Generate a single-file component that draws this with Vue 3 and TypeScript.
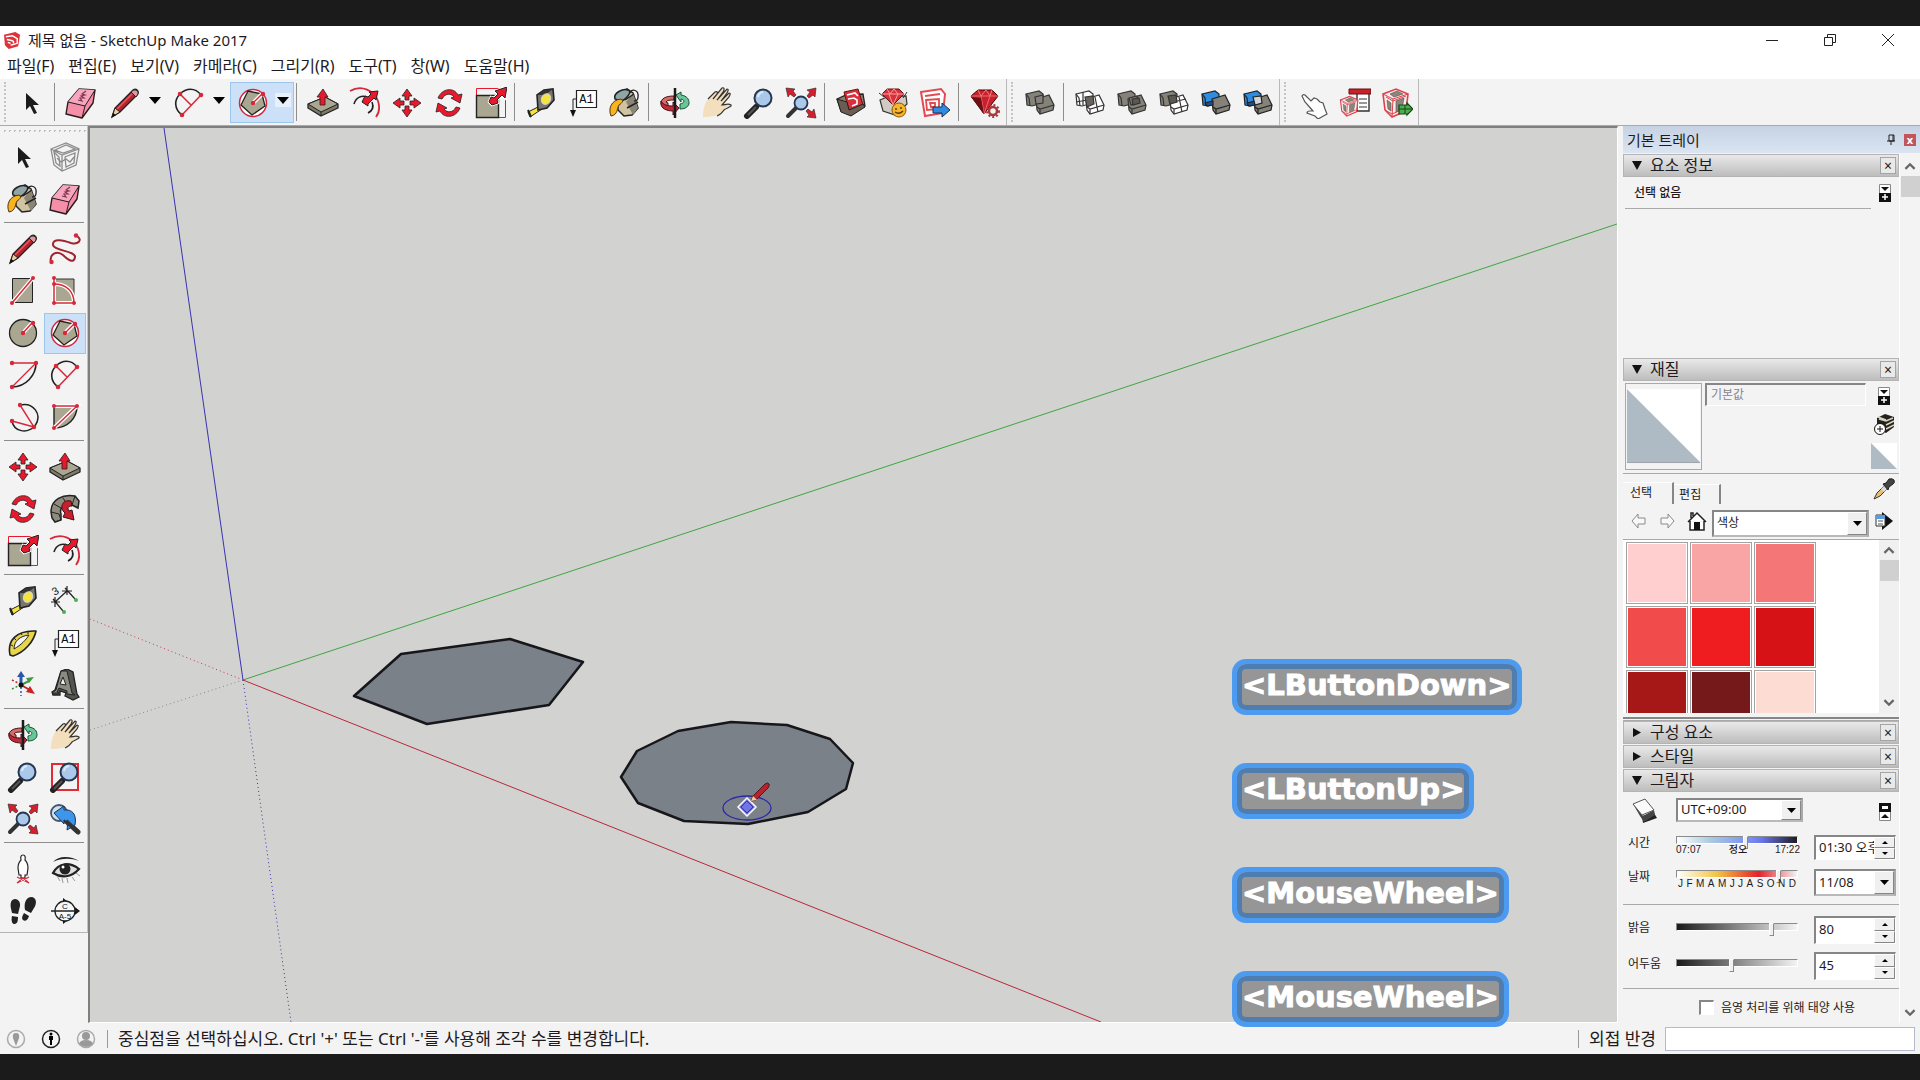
<script setup lang="ts">
import { ref } from 'vue'

interface Tool {
  icon: string
  label: string
  menu?: boolean
  on?: boolean
}

const menus: string[] = ['파일(F)', '편집(E)', '보기(V)', '카메라(C)', '그리기(R)', '도구(T)', '창(W)', '도움말(H)']

const bars: Tool[][][] = [
  [
    [{ icon: 'select', label: '선택' }],
    [
      { icon: 'eraser', label: '지우개' },
      { icon: 'pencil', label: '선', menu: true },
      { icon: 'arc2', label: '호', menu: true },
      { icon: 'polygon', label: '다각형', menu: true, on: true },
    ],
    [
      { icon: 'pushpull', label: '밀기/끌기' },
      { icon: 'offset', label: '오프셋' },
      { icon: 'move', label: '이동' },
      { icon: 'rotate', label: '회전' },
      { icon: 'scale', label: '배율' },
    ],
    [
      { icon: 'tape', label: '줄자' },
      { icon: 'note', label: '텍스트' },
      { icon: 'paint', label: '페인트통' },
    ],
    [
      { icon: 'orbit', label: '궤도' },
      { icon: 'pan', label: '이동 보기' },
      { icon: 'zoom', label: '확대/축소' },
      { icon: 'extents', label: '전체 보기' },
    ],
    [
      { icon: 'warehouse', label: '3D Warehouse' },
      { icon: 'extwarehouse', label: 'Extension Warehouse' },
      { icon: 'layout', label: 'LayOut' },
    ],
    [{ icon: 'ruby', label: '확장 프로그램' }],
  ],
  [
    [{ icon: 'shell', label: '외부 셸' }],
    [
      { icon: 'intersect', label: '교차' },
      { icon: 'union', label: '결합' },
      { icon: 'subtract', label: '빼기' },
      { icon: 'trim', label: '트림' },
      { icon: 'split', label: '분할' },
    ],
  ],
  [
    [
      { icon: 'interact', label: '상호 작용' },
      { icon: 'options', label: '구성 요소 옵션' },
      { icon: 'attributes', label: '구성 요소 속성' },
    ],
  ],
]

const palette: Tool[][] = [
  [
    { icon: 'select', label: '선택' },
    { icon: 'component', label: '구성 요소' },
    { icon: 'paint', label: '페인트통' },
    { icon: 'eraser', label: '지우개' },
  ],
  [
    { icon: 'pencil', label: '선' },
    { icon: 'freehand', label: '자유형' },
    { icon: 'rect', label: '직사각형' },
    { icon: 'rotrect', label: '회전 직사각형' },
    { icon: 'circle', label: '원' },
    { icon: 'polygon', label: '다각형', on: true },
    { icon: 'arc', label: '호' },
    { icon: 'arc2', label: '2점 호' },
    { icon: 'arc3', label: '3점 호' },
    { icon: 'pie', label: '파이' },
  ],
  [
    { icon: 'move', label: '이동' },
    { icon: 'pushpull', label: '밀기/끌기' },
    { icon: 'rotate', label: '회전' },
    { icon: 'follow', label: '따라가기' },
    { icon: 'scale', label: '배율' },
    { icon: 'offset', label: '오프셋' },
  ],
  [
    { icon: 'tape', label: '줄자' },
    { icon: 'dimension', label: '치수' },
    { icon: 'protractor', label: '각도기' },
    { icon: 'note', label: '텍스트' },
    { icon: 'axes', label: '축' },
    { icon: 'text3d', label: '3D 텍스트' },
  ],
  [
    { icon: 'orbit', label: '궤도' },
    { icon: 'pan', label: '이동 보기' },
    { icon: 'zoom', label: '확대/축소' },
    { icon: 'zoomwin', label: '확대/축소 창' },
    { icon: 'extents', label: '전체 보기' },
    { icon: 'previous', label: '이전' },
  ],
  [
    { icon: 'position', label: '카메라 배치' },
    { icon: 'look', label: '둘러보기' },
    { icon: 'walk', label: '걷기' },
    { icon: 'section', label: '단면' },
  ],
]

const keys: string[] = ['<LButtonDown>', '<LButtonUp>', '<MouseWheel>', '<MouseWheel>']
const swatches: string[] = ['#ffcfcf', '#faa5a5', '#f57676', '#f24b4b', '#ef1d20', '#d61216', '#a61718', '#76191a', '#fdddd3']
const months: string[] = 'JFMAMJJASOND'.split('')

const time = ref(57)
const date = ref(86)
const light = ref(80)
const dark = ref(45)
const sunShading = ref(false)
</script>

<template>
  <svg class="sprite" aria-hidden="true">
    <defs>
      <g id="lens">
        <path d="M4 29l9-9" stroke="#222" stroke-width="6" stroke-linecap="round" />
        <path d="M5 28l8-8" stroke="#555" stroke-width="2" />
        <circle cx="20" cy="11" r="8.5" fill="#a9c8ea" stroke="#27364f" stroke-width="2" />
        <path d="M15 10a6 6 0 0 1 5-5" stroke="#dcebfa" stroke-width="2" fill="none" />
      </g>
      <g id="box-a"><path d="M2 7l13-3 4 3v9l-11 3-5-1z" /><path d="M2 7l3 4 1 8" fill="none" /></g>
      <g id="box-b"><path d="M12 12l13-4 5 10-1 5-13 4-3-4z" /><path d="M13 20l3 2 14-4M16 22v5" fill="none" /></g>
      <g id="cube-red">
        <path d="M2 7L15 2l12 5-2 17-14 6L4 23z" fill="#f6eeee" stroke="#e0404c" stroke-width="1.6" />
        <path d="M9 7l7-3 6 3-9 3zM15 14l8-3-2 11-6 3zM6 13l4 3 0 8-3-2z" fill="#8b857b" stroke="#554f48" stroke-width="0.6" />
        <path d="M2 7l10 5 15-5M12 12l-1 18M5 10l7 4 13-5M4 23l7 4 14-6" fill="none" stroke="#e0404c" stroke-width="1" />
      </g>
    </defs>

    <symbol id="i-select" viewBox="0 0 32 32"><path d="M11 6v17l4-4 4 8 3-1-4-8h6z" fill="#1b1b1b" /></symbol>
    <symbol id="i-component" viewBox="0 0 32 32">
      <g fill="none" stroke="#8b8b8b" stroke-width="1.3">
        <path d="M2 8l15-6 13 6-3 16-14 6L5 24zM2 8l11 6 17-6M13 14v16M6 9l11-5 9 4-12 4zM5 11l2 11 4 3-1-9zM16 16l10-4-1 10-8 4z" />
        <path d="M8 17l4 4 5-3 4 3 4-5" />
      </g>
    </symbol>
    <symbol id="i-paint" viewBox="0 0 32 32">
      <path d="M8 8L18 2l6 4 5 15-6 7-8 1-6-6z" fill="#cfc3a2" stroke="#222" stroke-width="1.5" />
      <path d="M17 15l7-9 5 15-5 7z" fill="#8a8574" />
      <path d="M6 12C4 6 14 1 19 3c5 1-2 10-7 11z" fill="#8fa5a6" stroke="#222" stroke-width="1.5" />
      <path d="M16 13l9-6M18 21l11-6" stroke="#222" stroke-width="1.5" />
      <path d="M21 6c2-5 9-3 8 4 0 3-2 4-4 4" fill="none" stroke="#222" stroke-width="1.3" />
      <path d="M2 29C-1 22 2 13 12 12c3 2 1 4-2 6-2 3-1 10-8 11z" fill="#f8b420" stroke="#4a3610" />
    </symbol>
    <symbol id="i-eraser" viewBox="0 0 32 32">
      <path d="M14 2l16 1-2 13-11 15-16-4 2-12z" fill="#f58fa9" stroke="#2a1a1e" stroke-width="1.4" stroke-linejoin="round" />
      <path d="M14 2l16 1-10 16-17-4z" fill="#f7a6c0" />
      <path d="M3 15l17 4L30 3M20 19l-3 12" fill="none" stroke="#2a1a1e" />
      <path d="M21 4l-4 3 3 1-4 1 3 2-4 0 2 3-4-1" fill="none" stroke="#80384c" stroke-width="1.2" />
    </symbol>
    <symbol id="i-pencil" viewBox="0 0 32 32">
      <path d="M3 30l3-9L24 3q3-2 5 1 1 2-1 4L11 25z" fill="#b9222c" stroke="#222" stroke-width="1.3" />
      <path d="M8 22L24 6" stroke="#e75a5e" stroke-width="1.5" />
      <path d="M3 30l3-9 5 4z" fill="#e9cfa0" stroke="#222" /><path d="M3 30l1-4 3 2z" fill="#111" />
      <path d="M22 5l5 5 2-3q1-3-2-4-2-1-5 2z" fill="#d99aa0" stroke="#222" />
    </symbol>
    <symbol id="i-freehand" viewBox="0 0 32 32">
      <path d="M2 29C0 21 8 17 14 22c5 5 11 9 12 2 1-6-21-6-22-12C3 4 16 8 22 10c7 2 12-3 6-7" fill="none" stroke="#a02430" stroke-width="2" />
      <circle cx="2.500" cy="29" r="2.2" fill="#d6283a" /><circle cx="27" cy="2.500" r="2.2" fill="#d6283a" />
    </symbol>
    <symbol id="i-rect" viewBox="0 0 32 32">
      <path d="M5.500 3.500h20v24h-20z" fill="#a9a691" stroke="#222" />
      <path d="M5 28L26 3" stroke="#fff" stroke-width="4" /><path d="M5 28L26 3" stroke="#d6283a" stroke-width="1.5" />
      <circle cx="5" cy="28" r="2" fill="#d6283a" /><circle cx="26" cy="3" r="2" fill="#d6283a" />
    </symbol>
    <symbol id="i-rotrect" viewBox="0 0 32 32">
      <path d="M6 4h19v24H6z" fill="#a9a691" stroke="#333" />
      <path d="M5 3v25h20C25 16 17 9 5 9" fill="none" stroke="#fff" stroke-width="4" />
      <path d="M5 3v25h20C25 16 17 9 5 9" fill="none" stroke="#d6283a" stroke-width="1.5" />
      <g fill="#d6283a"><circle cx="5" cy="3" r="2" /><circle cx="5" cy="9" r="2" /><circle cx="5" cy="28" r="2" /><circle cx="25" cy="28" r="2" /></g>
    </symbol>
    <symbol id="i-circle" viewBox="0 0 32 32">
      <circle cx="16" cy="16" r="13.500" fill="#a9a691" stroke="#222" stroke-width="1.3" />
      <path d="M16 16l9-10" stroke="#fff" stroke-width="4" /><path d="M16 16l9-10" stroke="#d6283a" stroke-width="1.5" />
      <circle cx="16" cy="16" r="2.2" fill="#d6283a" /><circle cx="26" cy="6" r="2.2" fill="#d6283a" />
    </symbol>
    <symbol id="i-polygon" viewBox="0 0 32 32">
      <circle cx="16" cy="16" r="13.500" fill="#fff" stroke="#d6283a" stroke-width="1.5" />
      <path d="M11 4l14 3 3 12-13 9L4 18z" fill="#a9a691" stroke="#222" stroke-width="1.3" />
      <path d="M16 16l9-9" stroke="#fff" stroke-width="4" /><path d="M16 16l9-9" stroke="#d6283a" stroke-width="1.5" />
      <circle cx="16" cy="16" r="2.2" fill="#d6283a" /><circle cx="26" cy="7" r="2.200" fill="#d6283a" />
    </symbol>
    <symbol id="i-arc" viewBox="0 0 32 32">
      <path d="M29 4C29 16 19 28 5 28" fill="none" stroke="#222" stroke-width="1.6" />
      <path d="M5 4h24L5 28" fill="none" stroke="#d6283a" stroke-width="1.4" />
      <g fill="#d6283a"><circle cx="5" cy="4" r="2.2" /><circle cx="29" cy="4" r="2.2" /><circle cx="5" cy="28" r="2.2" /></g>
    </symbol>
    <symbol id="i-arc2" viewBox="0 0 32 32">
      <path d="M28 8C22 0 13 1 7 7 1 13 1 22 9 28" fill="none" stroke="#222" stroke-width="1.6" />
      <path d="M28 8L9 28M7 7l11 11" stroke="#d6283a" stroke-width="1.500" />
      <g fill="#d6283a"><circle cx="7" cy="7" r="2.3" /><circle cx="28" cy="8" r="2.3" /><circle cx="9" cy="28" r="2.3" /></g>
    </symbol>
    <symbol id="i-arc3" viewBox="0 0 32 32">
      <path d="M13 4C26 1 36 13 28 25 20 33 7 31 5 20" fill="none" stroke="#222" stroke-width="1.500" />
      <path d="M13 4l14 22L5 20" fill="none" stroke="#d6283a" stroke-width="1.4" />
      <g fill="#d6283a"><circle cx="13" cy="4" r="2.2" /><circle cx="27" cy="26" r="2.2" /><circle cx="5" cy="20" r="2.2" /></g>
    </symbol>
    <symbol id="i-pie" viewBox="0 0 32 32">
      <path d="M5 5h23c0 12-9 22-23 22z" fill="#a9a691" stroke="#222" stroke-width="1.4" />
      <path d="M5 27L28 5H5" fill="none" stroke="#fff" stroke-width="4" /><path d="M5 27L28 5H5" fill="none" stroke="#d6283a" stroke-width="1.4" />
      <g fill="#d6283a"><circle cx="5" cy="5" r="2" /><circle cx="28" cy="5" r="2" /><circle cx="5" cy="27" r="2" /></g>
    </symbol>
    <symbol id="i-move" viewBox="0 0 32 32">
      <g fill="#e8192c" stroke="#222" stroke-width="0.8">
        <path id="mv" d="M16 2l5 7h-3v4h-4V9h-3z" />
        <use href="#mv" transform="rotate(90 16 16)" /><use href="#mv" transform="rotate(180 16 16)" /><use href="#mv" transform="rotate(270 16 16)" />
      </g>
    </symbol>
    <symbol id="i-pushpull" viewBox="0 0 32 32">
      <path d="M1 17l17-7 13 7v4L14 29 1 21z" fill="#7d7a6a" stroke="#222" stroke-width="1.3" stroke-linejoin="round" />
      <path d="M1 17l17-7 13 7-17 8z" fill="#a9a691" stroke="#222" /><path d="M14 25v4" stroke="#222" />
      <path d="M16 2l5 8h-3v8h-5v-8h-3z" fill="#e8192c" stroke="#222" stroke-width="0.8" />
    </symbol>
    <symbol id="i-rotate" viewBox="0 0 32 32">
      <g fill="#e8192c" stroke="#222" stroke-width="0.8">
        <path id="rt" d="M5 11C9 1 21 0 25 8l4-1-2 9-9-5 3-1C18 6 12 6 9 12z" />
        <use href="#rt" transform="rotate(180 16 16)" />
      </g>
    </symbol>
    <symbol id="i-follow" viewBox="0 0 32 32">
      <path d="M2 19C2 6 14 1 26 3l4 5-1 7-6-3c-8-1-13 3-11 9l0 6-6 2-3-4z" fill="#8f8c7e" stroke="#222" stroke-width="1.500" />
      <path d="M2 19l8 2 2 6M5 11l7 4M14 5l4 6M26 3l-3 9" fill="none" stroke="#222" />
      <path d="M22 8C13 6 10 15 16 20l-2 4 11 3-2-10-3 1c-2-3-1-5 3-5z" fill="#c8202e" stroke="#411" />
    </symbol>
    <symbol id="i-scale" viewBox="0 0 32 32">
      <path d="M1.500 1.500h29v29h-29z" fill="none" stroke="#e8192c" />
      <path d="M1.500 8.500h22v22h-22z" fill="#a9a691" stroke="#222" stroke-width="1.4" />
      <path d="M14 15l2-5 3 1 4-4-3-3L32 0l-2 11-3-3-5 5 1 3-6 2z" fill="#e8192c" stroke="#fff" stroke-width="2.500" />
      <path d="M14 15l2-5 3 1 4-4-3-3L32 0l-2 11-3-3-5 5 1 3-6 2z" fill="#e8192c" stroke="#222" />
    </symbol>
    <symbol id="i-offset" viewBox="0 0 32 32">
      <path d="M1 4C13-3 25 4 29 14c2 6 1 12-2 16" fill="none" stroke="#d6283a" stroke-width="1.8" />
      <path d="M5 17C7 10 13 8 18 10M23 15c2 5 0 9-4 11" fill="none" stroke="#222" stroke-width="1.600" />
      <path d="M13 15l3-6 3 1 3-3-2-2 9-1-2 9-2-2-6 6 0 2z" fill="#e8192c" stroke="#222" />
    </symbol>
    <symbol id="i-tape" viewBox="0 0 32 32">
      <path d="M3 25l12-6 2 3-12 8z" fill="#f6e33c" stroke="#222" /><path d="M3 23l3 7" stroke="#222" stroke-width="2" />
      <path d="M12 8l7-5 9-1 1 11-7 8-9 2z" fill="#77776f" stroke="#222" stroke-width="1.600" />
      <path d="M12 8l7-5 9-1-8 6z" fill="#333" />
      <ellipse cx="21" cy="12" rx="4.500" ry="5.500" fill="#f6e33c" stroke="#d8d8d0" transform="rotate(25 21 12)" />
    </symbol>
    <symbol id="i-note" viewBox="0 0 32 32">
      <path d="M9.500 3.500h20v17h-20z" fill="#fff" stroke="#222" stroke-width="1.2" />
      <path d="M9 12H6v12" fill="none" stroke="#222" /><path d="M3 23h6l-3 7z" fill="#111" />
      <text x="19.500" y="16" text-anchor="middle" font-family="Liberation Mono, monospace" font-size="12" fill="#111">A1</text>
    </symbol>
    <symbol id="i-dimension" viewBox="0 0 32 32">
      <path d="M6 17L18 6M4 14l10 12M16 3l10 11M2 17h9M13 6h10M6 12v10M18 1v9" stroke="#222" stroke-width="1.200" />
      <circle cx="15" cy="27" r="2" fill="#4caf50" /><circle cx="27" cy="15" r="2" fill="#4caf50" />
      <text x="3" y="10" font-family="Liberation Sans, sans-serif" font-size="11" fill="#111" transform="rotate(-30 6 6)">3</text>
    </symbol>
    <symbol id="i-protractor" viewBox="0 0 32 32">
      <path d="M3 28C0 14 9 3 29 4 27 14 18 25 6 29z" fill="#e9d548" stroke="#222" stroke-width="1.600" stroke-linejoin="round" />
      <path d="M7 22C7 14 13 9 22 8 19 13 14 18 7 22z" fill="#f4f4f4" stroke="#222" />
      <path d="M4 18l2 1M7 11l2 2M14 6l1 2M21 4v3" stroke="#222" />
    </symbol>
    <symbol id="i-axes" viewBox="0 0 32 32">
      <path d="M14 16V6" stroke="#2b57a8" stroke-width="3" /><path d="M10 8l4-6 4 6z" fill="#2b57a8" />
      <path d="M14 16l8-4" stroke="#3e9a3e" stroke-width="2" /><path d="M19 9l8-1-5 6z" fill="#3e9a3e" />
      <path d="M14 16l9 5" stroke="#c22" stroke-width="2" /><path d="M23 17l5 8-9-2z" fill="#c22" />
      <path d="M14 18v9" stroke="#2b57a8" stroke-width="1.500" stroke-dasharray="2 2" />
      <path d="M5 20l8-4" stroke="#3e9a3e" stroke-width="1.500" stroke-dasharray="2 2" /><path d="M5 11l8 4" stroke="#c22" stroke-width="1.500" stroke-dasharray="2 2" />
      <circle cx="14" cy="16" r="2.500" fill="#111" />
    </symbol>
    <symbol id="i-text3d" viewBox="0 0 32 32">
      <path d="M12 2l6-2 6 3 4 22 2 3-6 3-8-4 1-3-6-2 0 4-7 0-1-3 3-2z" fill="#55554f" stroke="#222" stroke-width="1.300" />
      <path d="M12 2l6 0 5 22 3 2-8-1 0-3-8-3-2 4 2 1H3l4-3z" fill="#8b8a80" stroke="#222" />
      <path d="M14 8l3 8-6-1z" fill="#ededed" stroke="#222" />
    </symbol>
    <symbol id="i-orbit" viewBox="0 0 32 32">
      <path d="M15 9C6 9 2 12 2 16c0 3 4 5 7 5v-5l-2-1c1-2 4-2 8-2z" fill="#d86a6a" stroke="#411" />
      <path d="M17 8l5-3v3c6 1 8 4 8 8 0 3-3 6-9 6v-5c5-1 5-4 1-5v3z" fill="#6cc598" stroke="#153" />
      <path d="M2 14c2 4 7 5 12 5v-4l6 6-6 7v-4C7 24 2 21 2 17z" fill="#c0283c" stroke="#411" />
      <path d="M16 1v30" stroke="#1b1b1b" stroke-width="2.500" />
    </symbol>
    <symbol id="i-pan" viewBox="0 0 32 32">
      <path d="M2 30C2 22 4 16 7 12l7-7c2-1 3 0 2 2l5-6c2 0 2 1 1 4l4-3c2 0 1 2 0 4l2 0c2 1 0 3-1 4l-6 8c3 0 6-2 9 0 1 2-5 3-7 5-4 5-9 6-16 7z" fill="#f3dfbd" />
      <path d="M7 12l7-7c2-1 3 0 2 2l-4 5 9-11c2-1 3 1 1 4l-6 8 10-11c2 0 1 2 0 4l-6 8 8-8c2 0 1 2 0 4l-7 8c3 0 6-2 9 0 1 2-5 3-7 5-2 3-4 5-7 6" fill="none" stroke="#333" stroke-width="1.200" />
    </symbol>
    <symbol id="i-zoom" viewBox="0 0 32 32"><use href="#lens" /></symbol>
    <symbol id="i-zoomwin" viewBox="0 0 32 32"><path d="M3 3h26v26H3z" fill="none" stroke="#e02a35" stroke-width="2" /><use href="#lens" /></symbol>
    <symbol id="i-extents" viewBox="0 0 32 32">
      <path d="M3 29l8-8" stroke="#333" stroke-width="4" stroke-linecap="round" />
      <circle cx="16" cy="16" r="6.500" fill="#a9c8ea" stroke="#27364f" stroke-width="1.800" />
      <g fill="#d3202f" stroke="#222" stroke-width="0.6">
        <path id="ex" d="M31 1l-1 9-2-2-4 3-2-2 3-4-3-2z" /><use href="#ex" transform="rotate(90 16 16)" /><use href="#ex" transform="rotate(270 16 16)" />
      </g>
    </symbol>
    <symbol id="i-previous" viewBox="0 0 32 32">
      <path d="M17 18l12 11" stroke="#333" stroke-width="5" stroke-linecap="round" />
      <circle cx="10" cy="10" r="8" fill="#cfe0f2" stroke="#44546a" stroke-width="1.800" />
      <path d="M5 10L15 3v4c8-1 13 4 11 15l-8 5c1-6 0-9-3-10v4z" fill="#3d96ea" stroke="#1a3050" />
      <path d="M17 18l12 11" stroke="#333" stroke-width="4" />
    </symbol>
    <symbol id="i-position" viewBox="0 0 32 32">
      <path d="M16 2q3 0 2 5 3 3 3 8l-1 7h-2v3h-4v-3h-2l-1-7q0-5 3-8-1-5 2-5z" fill="#fff" stroke="#222" stroke-width="1.200" />
      <path d="M10 30l6-5 6 5M10 24l12 6M10 30l12-6" fill="none" stroke="#d6283a" stroke-width="1.300" />
    </symbol>
    <symbol id="i-look" viewBox="0 0 32 32">
      <path d="M4 9C10 2 22 3 30 8c-8-3-18-3-26 1z" fill="#222" />
      <path d="M4 20C10 9 21 9 30 16 22 25 12 25 4 20z" fill="#e0e0e0" stroke="#222" stroke-width="2.200" />
      <circle cx="16" cy="16" r="5.500" fill="#222" /><circle cx="14" cy="14" r="1.500" fill="#fff" />
      <path d="M8 23l3 5M13 25l1 5M18 25l1 5M23 24l3 4M27 20l4 3" stroke="#999" />
    </symbol>
    <symbol id="i-walk" viewBox="0 0 32 32">
      <path d="M4 7c3-6 10-2 9 4l-2 8-6-1c-1-5-2-7-1-11zM5 21l6 1c0 5-1 7-4 7-2 0-3-4-2-8zM18 15c-1-6 0-12 6-13 6 0 6 7 3 11l-3 5zM17 18l5 3c-1 4-4 6-6 4s0-5 1-7z" fill="#222" />
    </symbol>
    <symbol id="i-section" viewBox="0 0 32 32">
      <path d="M14 3l17 13-17 13z" fill="#111" />
      <circle cx="16" cy="16" r="10" fill="#f7f7f7" stroke="#222" stroke-width="1.300" /><path d="M2 16h28" stroke="#222" stroke-width="1.500" />
      <g font-family="Liberation Sans, sans-serif" font-size="8" text-anchor="middle" fill="#111"><text x="16" y="14">C</text><text x="16" y="24">A-5</text></g>
    </symbol>
    <symbol id="i-warehouse" viewBox="0 0 32 32">
      <path d="M2 12l9-4 17-1 2 12-14 9-10-4z" fill="#8b7d70" stroke="#222" stroke-width="1.300" />
      <path d="M9 5l14-3 5 16-14 5z" fill="#d9303a" stroke="#611" />
      <path d="M12 8l8-2 3 3M13 12l6-1 3 2 0 4-5 2" fill="none" stroke="#fff" stroke-width="1.600" />
      <path d="M2 12l10 3 2 8 14-6 2 3-14 9-10-4z" fill="#6a5d52" stroke="#222" />
    </symbol>
    <symbol id="i-extwarehouse" viewBox="0 0 32 32">
      <path d="M3 13l7-3 19-1 1 8-12 11-12-4z" fill="#cfcac2" stroke="#333" stroke-width="1.200" />
      <path d="M5 7l5-5h12l5 5-11 11z" fill="#d8303a" stroke="#611" /><path d="M5 7h22M10 2l3 5 4-5 4 5-5 11-4-11" stroke="#f7a0a0" fill="none" />
      <path d="M2 6l5 4M30 5l-4 6" stroke="#333" />
      <circle cx="22" cy="23" r="7" fill="#f7b52a" stroke="#8a5a08" /><path d="M19 21v2M24 20v2M18 25q4 3 8-1" stroke="#5a3a08" fill="none" stroke-width="1.400" />
    </symbol>
    <symbol id="i-layout" viewBox="0 0 32 32">
      <path d="M2 5l20-3 4 5-2 19-18 3z" fill="#fff" stroke="#e24a52" stroke-width="2" />
      <path d="M6 9l15-2M7 13l13-1v10l-12 1zM11 16h5v4h-4z" fill="none" stroke="#e24a52" stroke-width="1.800" />
      <path d="M14 20h9v-4l8 7-8 7v-4h-9z" fill="#2f8ce0" stroke="#1a2f50" />
    </symbol>
    <symbol id="i-ruby" viewBox="0 0 32 32">
      <path d="M2 9l7-6h14l6 6-14 18z" fill="#c8202c" stroke="#400" /><path d="M9 3l3 6 5-6 4 6 2-6" fill="none" stroke="#f08080" />
      <path d="M2 9h27M12 9l3 18 6-18" stroke="#f06a6a" fill="none" /><path d="M2 10l10 1 3 16z" fill="#6e0f16" />
      <circle cx="24" cy="24" r="4" fill="#f3f3f3" stroke="#a8383c" stroke-width="2.500" /><circle cx="24" cy="24" r="6" fill="none" stroke="#a8383c" stroke-width="2" stroke-dasharray="2 2" />
    </symbol>
    <symbol id="i-shell" viewBox="0 0 32 32">
      <g fill="#85827a" stroke="#333" stroke-width="1.200"><use href="#box-a" /><use href="#box-b" /><path d="M11 10l8-2v8l-7 1z" /></g>
    </symbol>
    <symbol id="i-intersect" viewBox="0 0 32 32">
      <g fill="#fff" stroke="#333" stroke-width="1.200"><use href="#box-a" /><use href="#box-b" /><path d="M2 15l17-3M9 5v13M21 10l3 15" fill="none" /><path d="M11 10l8-1 1 8-7 3z" fill="#66645c" /></g>
    </symbol>
    <symbol id="i-union" viewBox="0 0 32 32">
      <g fill="#85827a" stroke="#333" stroke-width="1.200"><use href="#box-a" /><use href="#box-b" /><path d="M13 11l8-2 1 7-7 2z" /><path d="M16 12l7-1 1 5-7 2z" fill="#5a584f" /></g>
    </symbol>
    <symbol id="i-subtract" viewBox="0 0 32 32">
      <g fill="#85827a" stroke="#333" stroke-width="1.200"><use href="#box-a" /><g fill="#fff"><use href="#box-b" /><path d="M15 15l13-3M21 10l3 15" /></g><path d="M10 9l8-1 1 7-7 2z" fill="#5a584f" /></g>
    </symbol>
    <symbol id="i-trim" viewBox="0 0 32 32">
      <g stroke="#222" stroke-width="1.200"><g fill="#2f8ce0"><use href="#box-a" /></g><g fill="#85827a"><use href="#box-b" /></g><path d="M5 16l8-2v4l-6 1z" fill="#1d4f8c" /></g>
    </symbol>
    <symbol id="i-split" viewBox="0 0 32 32">
      <g stroke="#222" stroke-width="1.200"><g fill="#2f8ce0"><use href="#box-a" /></g><g fill="#85827a"><use href="#box-b" /></g><path d="M5 16l8-2v4l-6 1z" fill="#1d4f8c" /><path d="M11 10l8-1 1 7-7 2z" fill="#d5d5d5" /></g>
    </symbol>
    <symbol id="i-interact" viewBox="0 0 32 32">
      <path d="M5 9q1-2 3-1l6 6 3-3 3 1 3 3 3 1 2 6 2 5-9 5-3-3-8-3q0-2 3-2l3 0-8-9z" fill="#fff" stroke="#555" stroke-width="1.200" />
    </symbol>
    <symbol id="i-options" viewBox="0 0 32 32">
      <path d="M18 3h12v21H18z" fill="#fff" stroke="#333" stroke-width="1.400" /><path d="M20 12h8M20 16h8M20 20h8" stroke="#333" />
      <path d="M10 2h22v5H10z" fill="#c8202c" stroke="#611" /><use href="#cube-red" transform="translate(0 8) scale(0.700)" />
    </symbol>
    <symbol id="i-attributes" viewBox="0 0 32 32">
      <use href="#cube-red" /><path d="M18 18h8v-2l6 6-6 6v-1h-8z" fill="#4cae4c" stroke="#17471a" stroke-width="1.200" /><path d="M18 22h13M24 18v9" stroke="#17471a" />
    </symbol>
    <symbol id="i-expand" viewBox="0 0 12 18"><path d="M.5.5h11v17H.5z" fill="#fff" stroke="#888" /><path d="M0 9h12v9H0z" fill="#111" /><path d="M2 3h8L6 7z" fill="#111" /><path d="M3 13h6M6 10v6" stroke="#fff" stroke-width="1.500" /></symbol>
    <symbol id="i-collapse" viewBox="0 0 12 18"><path d="M.5.5h11v17H.5z" fill="#fff" stroke="#888" /><path d="M0 0h12v9H0z" fill="#111" /><path d="M2 15h8l-4-4z" fill="#111" /><path d="M3 3h6v3H3z" fill="#fff" /></symbol>
    <symbol id="i-up" viewBox="0 0 6 3"><path d="M0 3h6L3 0z" /></symbol>
    <symbol id="i-down" viewBox="0 0 6 3"><path d="M0 0h6L3 3z" /></symbol>
  </svg>

  <div class="screen">
    <div class="window">
      <header class="titlebar">
        <svg class="logo" viewBox="0 0 18 18" aria-hidden="true">
          <path d="M0 3l12-3 5 3-2 12-10 3L1 14z" fill="#e0303a" />
          <path d="M2 5l7-1 5 3v5l-7 2M3 8l5 1 2 1v2M4 11l3 1" fill="none" stroke="#fff" stroke-width="1.500" />
        </svg>
        <h1>제목 없음 - SketchUp Make 2017</h1>
        <div class="controls">
          <button aria-label="최소화"><svg viewBox="0 0 14 14"><path d="M1 7.500h12" /></svg></button>
          <button aria-label="이전 크기로 복원"><svg viewBox="0 0 14 14"><path d="M1.500 4.500h8v8h-8zM4.500 4V1.500h8v8H10" /></svg></button>
          <button aria-label="닫기"><svg viewBox="0 0 14 14"><path d="M1 1l12 12M13 1L1 13" /></svg></button>
        </div>
      </header>

      <nav class="menubar">
        <button v-for="m in menus" :key="m">{{ m }}</button>
      </nav>

      <div class="toolbars">
        <div v-for="(bar, b) in bars" :key="b" class="bar">
          <span class="grip"></span>
          <template v-for="(group, g) in bar" :key="g">
            <span v-if="g" class="rule"></span>
            <button v-for="t in group" :key="t.icon" class="tool" :class="{ wide: t.menu, on: t.on }" :aria-label="t.label">
              <svg class="ico"><use :href="'#i-' + t.icon" /></svg>
              <span v-if="t.menu" class="drop"><svg viewBox="0 0 12 7"><path d="M0 0h12L6 7z" /></svg></span>
            </button>
          </template>
        </div>
      </div>

      <main class="body">
        <div class="side">
          <div class="palette">
            <span class="grip-h"></span>
            <div v-for="(group, g) in palette" :key="g" class="group">
              <button v-for="t in group" :key="t.icon" class="tool" :class="{ on: t.on }" :aria-label="t.label">
                <svg class="ico"><use :href="'#i-' + t.icon" /></svg>
              </button>
            </div>
          </div>
        </div>

        <section class="viewport" aria-label="모델">
          <svg class="model" viewBox="90 128 1527 894" preserveAspectRatio="xMinYMin slice">
            <g fill="none" stroke-width="1">
              <path d="M243 680L1617 224" stroke="#3fa63f" />
              <path d="M243 680L164 128" stroke="#3b32b0" />
              <path d="M243 680L1101 1022" stroke="#b8283c" />
              <path d="M243 680L90 619" stroke="#c0384a" stroke-dasharray="1 3" />
              <path d="M243 680L90 730" stroke="#7d8f7d" stroke-dasharray="1 3" />
              <path d="M243 680L291 1022" stroke="#3b32b0" stroke-dasharray="1 3" />
            </g>
            <g fill="#7b8189" stroke="#17161b" stroke-width="2.500" stroke-linejoin="round">
              <path d="M354 696L401 654 510 639 583 662 549 705 427 724z" />
              <path d="M621 777L637 751 678 731 731 722 787 725 830 739 853 763 846 789 808 812 748 824 684 821 638 803z" />
            </g>
            <ellipse cx="747" cy="808" rx="24" ry="12" fill="none" stroke="#2c28a8" stroke-width="1.300" />
            <path d="M747 798l9 9-9 9-9-9z" fill="#6b6fe0" stroke="#fff" stroke-width="1.500" />
            <path d="M747 801l6 6-6 6-6-6z" fill="#7276e4" stroke="#3733a6" />
            <path d="M751 801l2-5 12-12q3-2 4 0 1 1-1 4l-12 12z" fill="#b9222c" stroke="#4a1a1e" />
            <path d="M751 801l2-5 4 4z" fill="#e9cfa0" />
          </svg>
          <ul class="keys">
            <li v-for="(k, i) in keys" :key="i">{{ k }}</li>
          </ul>
        </section>

        <aside class="tray">
          <div class="tray-title">
            <h2>기본 트레이</h2>
            <button class="pin" aria-label="고정"><svg viewBox="0 0 10 12"><path d="M3 1h5v6H3zM1 7h8M5 7v4M7 1v6" /></svg></button>
            <button class="quit" aria-label="트레이 닫기">x</button>
          </div>
          <div class="tray-body">
            <div class="panels">
              <section>
                <div class="head"><span class="tri open"></span><h3>요소 정보</h3><button aria-label="닫기">×</button></div>
                <div class="info">
                  <p>선택 없음</p>
                  <svg class="toggle"><use href="#i-expand" /></svg>
                </div>
              </section>

              <section>
                <div class="head"><span class="tri open"></span><h3>재질</h3><button aria-label="닫기">×</button></div>
                <div class="material">
                  <svg class="preview" viewBox="0 0 77 87"><path d="M1 5h75v75H1z" fill="#fff" /><path d="M1 5l75 75H1z" fill="#afbbc4" /><path d="M1 80.500h75" stroke="#9aa0a8" /></svg>
                  <input class="matname" type="text" value="기본값" aria-label="재질 이름" disabled />
                  <div class="matside">
                    <svg class="toggle"><use href="#i-expand" /></svg>
                    <svg class="create" viewBox="0 0 21 22"><path d="M3 5l8-4 9 3v10l-8 6-9-5z" fill="#222" /><path d="M5 6l7 2 7-3M4 4l8 3M12 12l8-4M12 16l8-4" stroke="#d8d4b8" stroke-width="1.500" fill="none" /><circle cx="6" cy="16" r="5.500" fill="#fff" stroke="#111" /><path d="M6 13v6M3 16h6" stroke="#111" /></svg>
                    <svg class="mini" viewBox="0 0 26 26"><path d="M0 0h26v26H0z" fill="#fff" /><path d="M0 0l26 26H0z" fill="#afbbc4" /></svg>
                  </div>
                </div>
                <div class="tabs">
                  <button class="cur">선택</button><button>편집</button>
                  <svg class="dropper" viewBox="0 0 22 22"><path d="M1 21l3-6 8-8 3 3-8 8z" fill="#e8c070" stroke="#333" /><path d="M8 11l4-4 3 3-4 4z" fill="#ddd" /><path d="M10 6l3-1 3-4q3-1 5 1 1 3-1 4l-4 3-1 3z" fill="#444" stroke="#222" /></svg>
                </div>
                <div class="browse">
                  <button class="nav" aria-label="뒤로"><svg viewBox="0 0 16 16"><path d="M1 8l6-7v4h7v6H7v4z" /></svg></button>
                  <button class="nav" aria-label="앞으로"><svg viewBox="0 0 16 16"><path d="M15 8L9 1v4H2v6h7v4z" /></svg></button>
                  <button class="home" aria-label="모델 내"><svg viewBox="0 0 20 20"><path d="M3 10v9h14v-9M1 11l9-9 9 9M4 7V2h2v3" fill="#fff" stroke="#222" stroke-width="1.500" /><path d="M7 11h6v8H7z" fill="#111" /></svg></button>
                  <span class="combo lib">
                    <select aria-label="재질 모음"><option>색상</option></select>
                    <i><svg viewBox="0 0 9 5"><path d="M0 0h9L4.500 5z" /></svg></i>
                  </span>
                  <button class="detail" aria-label="세부 정보"><svg viewBox="0 0 18 18"><path d="M7 0l11 9-11 9z" fill="#111" /><path d="M1 3h9v11H1z" fill="#fff" stroke="#333" /><path d="M1 3h9v4H1z" fill="#5b9be0" /><path d="M3 9h5M3 12h5" stroke="#555" /></svg></button>
                </div>
                <div class="list">
                  <div class="swatches">
                    <button v-for="s in swatches" :key="s" :style="{ backgroundColor: s }" :aria-label="s"></button>
                  </div>
                  <div class="scroll inner">
                    <svg viewBox="0 0 10 7"><path d="M1 6l4-4 4 4" /></svg><span></span><svg class="end" viewBox="0 0 10 7"><path d="M1 1l4 4 4-4" /></svg>
                  </div>
                </div>
                <div class="splitter"></div>
              </section>

              <div class="head"><span class="tri"></span><h3>구성 요소</h3><button aria-label="닫기">×</button></div>
              <div class="head"><span class="tri"></span><h3>스타일</h3><button aria-label="닫기">×</button></div>
              <section>
                <div class="head"><span class="tri open"></span><h3>그림자</h3><button aria-label="닫기">×</button></div>
                <div class="shadow sun">
                  <svg class="shade" viewBox="0 0 25 25"><path d="M10 18l12-3 3 5-14 5z" fill="#222" /><path d="M1 6l7 12 4 6 11-7-1-5-11 6z" fill="#444" /><path d="M1 6l12-5 9 11-12 5z" fill="#fbfbfb" stroke="#555" /></svg>
                  <span class="combo zone">
                    <select aria-label="시간대"><option>UTC+09:00</option></select>
                    <i><svg viewBox="0 0 9 5"><path d="M0 0h9L4.500 5z" /></svg></i>
                  </span>
                  <svg class="toggle right"><use href="#i-collapse" /></svg>

                  <label for="time">시간</label>
                  <div>
                    <input id="time" v-model.number="time" class="t-time" type="range" />
                    <div class="ticks"><span>07:07</span><span>정오</span><span>17:22</span></div>
                  </div>
                  <span class="spin small">
                    <input type="text" value="01:30 오후" aria-label="시간 값" />
                    <span><button aria-label="증가"><svg><use href="#i-up" /></svg></button><button aria-label="감소"><svg><use href="#i-down" /></svg></button></span>
                  </span>

                  <label for="date">날짜</label>
                  <div>
                    <input id="date" v-model.number="date" class="t-date" type="range" />
                    <div class="ticks months"><span v-for="(m, i) in months" :key="i">{{ m }}</span></div>
                  </div>
                  <span class="combo day">
                    <select aria-label="날짜 값"><option>11/08</option></select>
                    <i><svg viewBox="0 0 9 5"><path d="M0 0h9L4.500 5z" /></svg></i>
                  </span>
                </div>
                <div class="shadow tone">
                  <label for="light">밝음</label>
                  <input id="light" v-model.number="light" class="t-gray" type="range" />
                  <span class="spin">
                    <input v-model.number="light" type="text" aria-label="밝음 값" />
                    <span><button aria-label="증가"><svg><use href="#i-up" /></svg></button><button aria-label="감소"><svg><use href="#i-down" /></svg></button></span>
                  </span>
                  <label for="dark">어두움</label>
                  <input id="dark" v-model.number="dark" class="t-gray" type="range" />
                  <span class="spin">
                    <input v-model.number="dark" type="text" aria-label="어두움 값" />
                    <span><button aria-label="증가"><svg><use href="#i-up" /></svg></button><button aria-label="감소"><svg><use href="#i-down" /></svg></button></span>
                  </span>
                </div>
                <label class="check"><input v-model="sunShading" type="checkbox" />음영 처리를 위해 태양 사용</label>
              </section>
            </div>
            <div class="scroll">
              <svg viewBox="0 0 10 7"><path d="M1 6l4-4 4 4" /></svg><span></span><svg class="end" viewBox="0 0 10 7"><path d="M1 1l4 4 4-4" /></svg>
            </div>
          </div>
        </aside>
      </main>

      <footer class="status">
        <button aria-label="위치"><svg viewBox="0 0 20 20"><circle cx="10" cy="10" r="8.500" fill="none" stroke="#aaa" stroke-width="1.500" /><path d="M10 17L7 9q-1-5 3-5t3 5z" fill="#999" /></svg></button>
        <button aria-label="크레딧"><svg viewBox="0 0 20 20"><circle cx="10" cy="10" r="8.500" fill="none" stroke="#222" stroke-width="1.500" /><circle cx="10" cy="5" r="1.500" /><path d="M8 7h4v4h-1v5H9v-5H8z" /></svg></button>
        <button aria-label="로그인"><svg viewBox="0 0 20 20"><circle cx="10" cy="10" r="8.500" fill="none" stroke="#aaa" stroke-width="1.500" /><circle cx="10" cy="7" r="4" fill="#999" /><path d="M3 15q1-4 7-4t7 4q-7 6-14 0z" fill="#999" /></svg></button>
        <p>중심점을 선택하십시오. Ctrl '+' 또는 Ctrl '-'를 사용해 조각 수를 변경합니다.</p>
        <label for="vcb">외접 반경</label>
        <input id="vcb" type="text" />
      </footer>
    </div>
  </div>
</template>

<style>
html,
body {
  margin: 0;
  background: #1b1b1b;
}
</style>

<style scoped>
.sprite {
  display: none;
}
.screen {
  box-sizing: border-box;
  display: flex;
  flex-direction: column;
  min-height: 100vh;
  padding: 26px 0;
  background: #1b1b1b;
  color: #1e1a20;
  font-family: 'Noto Sans', 'Noto Sans CJK KR', sans-serif;
  font-size: 15px;
}
.screen * {
  box-sizing: border-box;
}
button,
input,
select {
  margin: 0;
  padding: 0;
  border: 0;
  border-radius: 0;
  background: none;
  color: inherit;
  font: inherit;
  outline: 0;
}
h1,
h2,
h3,
p,
ul {
  margin: 0;
  padding: 0;
  font-size: inherit;
  font-weight: 400;
}
.window {
  flex: 1;
  display: flex;
  flex-direction: column;
  background: #f3f3f3;
}
.titlebar {
  display: flex;
  align-items: center;
  height: 28px;
  padding-left: 4px;
  background: #fff;
}
.titlebar h1 {
  padding-bottom: 2px;
}
.logo {
  width: 17px;
  height: 17px;
  margin-right: 7px;
}
.controls {
  display: flex;
  margin-left: auto;
  padding-right: 3px;
}
.controls button {
  display: grid;
  place-items: center;
  width: 58px;
  height: 28px;
}
.controls svg {
  width: 14px;
  height: 14px;
  fill: none;
  stroke: #222;
}
.menubar {
  display: flex;
  gap: 14px;
  height: 25px;
  padding-left: 7px;
  background: #fff;
}
.menubar button {
  font-size: 16px;
  line-height: 25px;
}

.toolbars {
  display: flex;
  height: 47px;
  border-bottom: 1px solid #a9a9a9;
}
.bar {
  display: flex;
  align-items: center;
  border-right: 1px solid #b9b9b9;
}
.grip {
  width: 4px;
  height: 40px;
  margin: 0 2px 0 4px;
  border-left: 2px dotted #c4c4c4;
}
.bar:not(:first-child) .grip {
  margin-right: 4px;
}
.rule {
  width: 8px;
  height: 38px;
  background: linear-gradient(#8d8d8d, #8d8d8d) 2px 0 / 1px 100% no-repeat;
}
.tool {
  display: flex;
  align-items: center;
  justify-content: center;
  width: 42px;
  height: 41px;
}
.tool.wide {
  width: 64px;
  padding-left: 4px;
}
.ico {
  flex: none;
  width: 32px;
  height: 32px;
}
.bar .ico {
  margin-top: 1px;
}
.drop {
  display: grid;
  place-items: center;
  width: 16px;
  height: 14px;
  margin: 0 0 4px 6px;
}
.drop svg {
  width: 12px;
  height: 7px;
}
.tool.on {
  border: 1px solid #9cc6ee;
  background: #cce1f7;
}
.on .drop {
  background: #e8f1fb;
}

.body {
  flex: 1;
  display: flex;
}
.side {
  width: 88px;
}
.palette {
  border-right: 1px solid #c2c2c2;
  border-bottom: 1px solid #b4b4b4;
  padding: 0 1px 0 2px;
}
.grip-h {
  display: block;
  height: 10px;
  background: radial-gradient(circle, #bdbdbd 1px, transparent 1px) 0 2px / 5px 5px repeat-x;
}
.group {
  display: grid;
  grid-template-columns: 42px 42px;
  grid-auto-rows: 42px;
  align-items: center;
}
.group + .group {
  padding-top: 8px;
  background: linear-gradient(#8d8d8d, #8d8d8d) 2px 2px / 80px 1px no-repeat;
}

.viewport {
  position: relative;
  flex: 1;
  min-width: 0;
  border: 2px solid #7f7f7f;
  border-right: 1px solid #fff;
  border-bottom: 1px solid #fff;
  background: #d2d2d0;
}
.model {
  position: absolute;
  inset: 0;
  width: 100%;
  height: 100%;
}
.keys {
  position: absolute;
  right: 85px;
  bottom: -5px;
  display: flex;
  flex-direction: column;
  align-items: flex-start;
  gap: 48px;
  width: 300px;
  list-style: none;
}
.keys li {
  height: 56px;
  padding: 0 5px;
  border: 5px solid #4c9bf0;
  border-radius: 14px;
  background: #969696;
  box-shadow: inset 0 0 0 5px #4f7daf;
  color: #fff;
  font-family: 'DejaVu Sans', sans-serif;
  font-size: 29px;
  font-weight: 700;
  line-height: 42px;
  white-space: nowrap;
  -webkit-text-stroke: 1px #fff;
}

.tray {
  display: flex;
  flex-direction: column;
  width: 302px;
  padding-left: 5px;
}
.tray-title {
  display: flex;
  align-items: center;
  height: 27px;
  padding: 0 4px 0 4px;
  background: linear-gradient(#c6d2e3, #dae4f2);
}
.tray-title h2 {
  flex: 1;
}
.pin svg {
  display: block;
  width: 10px;
  height: 12px;
  fill: none;
  stroke: #222;
}
.quit {
  width: 12px;
  height: 12px;
  margin-left: 8px;
  background: #c4545c;
  color: #fff;
  font-size: 11px;
  font-weight: 700;
  line-height: 9px;
}
.tray-body {
  flex: 1;
  display: flex;
  padding-top: 1px;
}
.panels {
  width: 277px;
  border-right: 1px solid #fff;
}
.head {
  display: flex;
  align-items: center;
  height: 23px;
  padding: 0 2px 0 8px;
  margin-bottom: 1px;
  border: 1px solid #b4b4b4;
  background: linear-gradient(#e9e9e9, #bdbdbd);
}
section .head {
  margin-bottom: 0;
}
.head h3 {
  flex: 1;
  margin-left: 8px;
  padding-bottom: 1px;
  font-size: 16px;
  line-height: 20px;
}
.head button {
  width: 16px;
  height: 17px;
  border: 1px solid #a5a5a5;
  background: #e9e9e9;
  font-size: 14px;
  line-height: 14px;
}
.tri {
  width: 10px;
  height: 9px;
  background: #111;
  clip-path: polygon(10% 0, 90% 50%, 10% 100%);
}
.tri.open {
  clip-path: polygon(0 0, 100% 0, 50% 100%);
}
.toggle {
  width: 12px;
  height: 18px;
}
.info {
  display: flex;
  justify-content: space-between;
  align-items: flex-start;
  min-height: 181px;
  padding: 7px 8px 0 2px;
}
.info p {
  width: 246px;
  height: 25px;
  padding-left: 9px;
  border-bottom: 1px solid #a9a9a9;
  font-size: 12px;
  font-weight: 500;
  line-height: 18px;
}
.material {
  display: flex;
  align-items: flex-start;
  padding: 2px 2px 3px;
  border-bottom: 1px solid #a9a9a9;
}
.preview {
  width: 77px;
  height: 87px;
  border: 1px solid #a9a9a9;
}
.matname {
  width: 161px;
  height: 23px;
  margin: 0 5px 0 3px;
  padding: 0 4px 2px;
  border: 1px solid #fff;
  border-top: 2px solid #868686;
  border-left: 2px solid #868686;
  color: #88848c;
  font-size: 12px;
}
.matside {
  display: flex;
  flex-direction: column;
  align-items: center;
  gap: 8px;
  width: 26px;
  padding-top: 4px;
}
.create {
  width: 21px;
  height: 22px;
}
.mini {
  width: 26px;
  height: 26px;
}
.tabs {
  display: flex;
  align-items: flex-end;
  height: 30px;
}
.tabs button {
  height: 20px;
  padding: 0 18px 0 5px;
  border-right: 2px solid #868686;
  border-top: 1px solid #fff;
  font-size: 12px;
  line-height: 17px;
}
.tabs .cur {
  height: 22px;
  padding: 0 20px 2px 7px;
}
.dropper {
  align-self: center;
  width: 22px;
  height: 22px;
  margin: 0 4px 0 auto;
}
.browse {
  display: flex;
  align-items: center;
  height: 36px;
  padding: 3px 6px 0 8px;
  border-bottom: 1px solid #a9a9a9;
}
.browse button {
  padding-bottom: 5px;
}
.browse svg {
  display: block;
}
.nav {
  margin-right: 12px;
}
.nav svg {
  width: 16px;
  height: 16px;
  fill: #f8f8f8;
  stroke: #8a8a8a;
}
.home svg {
  width: 20px;
  height: 20px;
}
.detail {
  margin-left: auto;
}
.detail svg {
  width: 18px;
  height: 18px;
}
.combo {
  display: grid;
  grid-template-columns: 1fr 20px;
  border: 2px solid #868686;
  border-right-color: #a9a9a9;
  border-bottom-color: #b9b9b9;
  background: #fff;
}
.combo select {
  grid-area: 1 / 1 / 2 / 3;
  min-width: 0;
  padding: 0 0 2px 3px;
  appearance: none;
}
.combo i {
  grid-area: 1 / 2;
  display: grid;
  place-items: center;
  border: 1px solid #fff;
  border-right-color: #868686;
  border-bottom-color: #868686;
  background: #f0f0f0;
  pointer-events: none;
}
.combo i svg {
  width: 9px;
  height: 5px;
}
.lib {
  width: 157px;
  height: 27px;
  margin-left: 5px;
  font-size: 12px;
}
.zone {
  width: 127px;
  height: 24px;
  font-size: 13px;
}
.day {
  width: 82px;
  height: 27px;
  font-size: 13px;
}
.list {
  display: flex;
  justify-content: space-between;
  height: 173px;
  overflow: hidden;
  background: #fff;
}
.swatches {
  display: grid;
  grid-template-columns: repeat(3, 62px);
  grid-auto-rows: 62px;
  gap: 2px;
  padding: 2px 3px;
}
.swatches button {
  border: 1px solid #a3a3a3;
  box-shadow: inset 0 0 0 1px #fff;
}
.splitter {
  height: 8px;
  border-bottom: 1px solid #a9a9a9;
  background: linear-gradient(#868686, #868686) 0 4px / 100% 2px no-repeat;
}
.scroll {
  display: flex;
  flex-direction: column;
  align-items: center;
  width: 20px;
  padding: 8px 0 6px;
}
.scroll svg {
  width: 12px;
  height: 8px;
  fill: none;
  stroke: #666;
  stroke-width: 2;
}
.scroll span {
  width: 19px;
  height: 21px;
  margin-top: 6px;
  background: #d0d0d0;
}
.scroll .end {
  margin-top: auto;
}
.inner {
  padding: 6px 0;
  background: #f0f0f0;
}

.shadow {
  display: grid;
  grid-template-columns: 48px 138px 82px;
  align-items: start;
  padding: 6px 0 0 5px;
  font-size: 12px;
}
.sun {
  grid-template-rows: 37px 34px 35px;
  border-bottom: 1px solid #a9a9a9;
}
.tone {
  grid-template-rows: 36px 36px;
  padding-top: 11px;
  border-bottom: 1px solid #a9a9a9;
}
.shadow label {
  line-height: 15px;
}
.tone label {
  padding-top: 4px;
}
.shade {
  width: 25px;
  height: 25px;
  margin-left: 4px;
}
.right {
  justify-self: end;
  margin: 5px 5px 0 0;
}
input[type='range'] {
  display: block;
  width: 122px;
  height: 9px;
  appearance: none;
}
.tone input[type='range'] {
  margin-top: 6px;
}
input[type='range']::-webkit-slider-runnable-track {
  height: 8px;
  border: 1px solid #fff;
  border-top-color: #8a8a8a;
  border-left-color: #8a8a8a;
  background: var(--ramp);
}
input[type='range']::-webkit-slider-thumb {
  width: 5px;
  height: 13px;
  margin-top: -1px;
  border: 1px solid #fff;
  border-right-color: #8a8a8a;
  border-bottom-color: #8a8a8a;
  background: #f0f0f0;
  appearance: none;
}
.t-time {
  --ramp: linear-gradient(90deg, #fff, #aecbe0 27%, #7a8ff0 60%, #6a78ee 70%, #1c1a22);
}
.t-date {
  --ramp: linear-gradient(90deg, #fff, #f3c545 33%, #e6202a 68%, #f3f3f3);
}
.t-gray {
  --ramp: linear-gradient(90deg, #1b1b1b, #f3f3f3);
}
.ticks {
  display: flex;
  justify-content: space-between;
  width: 124px;
  font-family: 'Liberation Sans', 'Noto Sans CJK KR', sans-serif;
  font-size: 10px;
  font-weight: 500;
  line-height: 11px;
}
.months {
  padding: 0 2px;
  width: 122px;
}
.spin {
  display: flex;
  width: 82px;
  height: 28px;
  border: 2px solid #868686;
  border-right: 1px solid #fff;
  border-bottom: 1px solid #fff;
  background: #fff;
  font-size: 13px;
}
.spin.small {
  height: 25px;
}
.spin input {
  flex: 1;
  min-width: 0;
  padding: 0 0 4px 3px;
}
.spin > span {
  display: flex;
  flex-direction: column;
  width: 21px;
}
.spin button {
  flex: 1;
  display: grid;
  place-items: center;
  min-height: 0;
  border: 1px solid #fff;
  border-right-color: #868686;
  border-bottom-color: #868686;
  background: #f0f0f0;
}
.spin svg {
  width: 6px;
  height: 3px;
}
.check {
  display: flex;
  align-items: center;
  justify-content: flex-end;
  gap: 7px;
  padding: 9px 44px 0 0;
  font-size: 12px;
}
.check input {
  width: 15px;
  height: 15px;
  border: 1px solid #fff;
  border-top: 2px solid #868686;
  border-left: 2px solid #868686;
  background: #fff;
  appearance: none;
}

.status {
  display: flex;
  align-items: center;
  height: 31px;
  padding: 0 5px 0 6px;
}
.status button {
  width: 20px;
  height: 20px;
  margin-right: 15px;
}
.status button svg {
  display: block;
  width: 20px;
  height: 20px;
}
.status p {
  flex: 1;
  margin-left: -4px;
  padding-left: 10px;
  border-left: 1px solid #999;
  font-size: 17px;
  line-height: 18px;
}
.status label {
  padding: 0 9px 0 10px;
  border-left: 1px solid #999;
  font-size: 17px;
  line-height: 18px;
}
.status input {
  width: 250px;
  height: 24px;
  border: 1px solid #b4bccb;
  background: #fff;
}
</style>
